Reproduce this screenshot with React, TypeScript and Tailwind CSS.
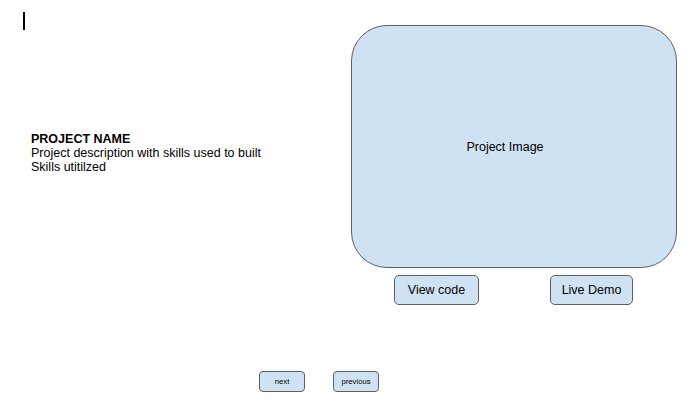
export default function App() {
  return (
    <div
      className="h-[412px] w-[688px] bg-white text-black"
      style={{ fontFamily: '"Liberation Sans", Arial, sans-serif' }}
    >
      <div className="flex">
        {/* left column: caret + project info */}
        <div className="w-[351px] pt-[12px]">
          <div className="ml-[23px] h-[18px] w-[2px] bg-black" />
          <div className="ml-[31px] mt-[102px] text-[12.5px] leading-[14px]">
            <div className="font-bold">PROJECT NAME</div>
            <div>Project description with skills used to built</div>
            <div>Skills utitilzed</div>
          </div>
        </div>

        {/* right column: image + actions */}
        <div className="w-[326px] pt-[25px]">
          <div className="flex h-[243px] w-[326px] items-center justify-center rounded-[36px] border border-[#5f5f5f] bg-[#cfe2f3] pr-[18px] text-[12.5px]">
            <span className="mt-[2px]">Project Image</span>
          </div>
          <div className="mt-[7px] flex justify-between pl-[43px] pr-[44px]">
            <button className="flex h-[30px] w-[85px] items-center justify-center rounded-[5px] border border-[#5f5f5f] bg-[#cfe2f3] text-[12.5px]">
              View code
            </button>
            <button className="flex h-[30px] w-[83px] items-center justify-center rounded-[5px] border border-[#5f5f5f] bg-[#cfe2f3] text-[12.5px]">
              Live Demo
            </button>
          </div>
        </div>
      </div>

      {/* pager */}
      <div className="mt-[66px] flex gap-[28px] pl-[259px]">
        <button className="flex h-[21px] w-[46px] items-center justify-center rounded-[4px] border border-[#5f5f5f] bg-[#cfe2f3] text-[7.7px]">
          next
        </button>
        <button className="flex h-[21px] w-[46px] items-center justify-center rounded-[4px] border border-[#5f5f5f] bg-[#cfe2f3] text-[7.7px]">
          previous
        </button>
      </div>
    </div>
  );
}
